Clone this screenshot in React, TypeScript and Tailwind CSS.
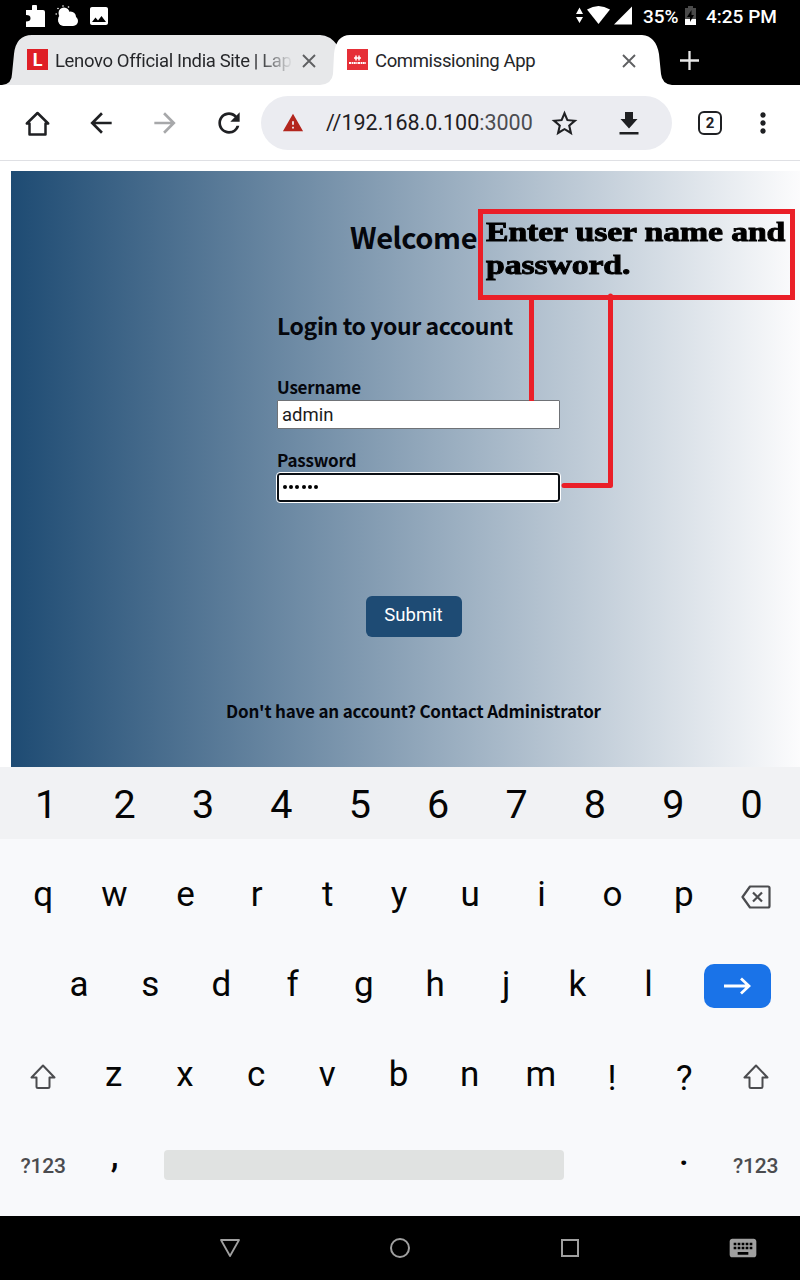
import type { ReactNode } from "react";
import {
  MdArrowBack,
  MdArrowForward,
  MdImage,
  MdKeyboard,
  MdMoreVert,
  MdRefresh,
  MdStarBorder,
  MdWarning,
} from "react-icons/md";

function StatusBar() {
  return (
    <div className="flex h-[34px] items-center bg-black pl-[24px] pr-[22px] text-white">
      <svg className="size-[24px]" viewBox="0 0 24 24" fill="currentColor">
        <path d="M2 5H8V2Q8 -1 10.500 -1T13 2V5H19Q21 5 21 7V22H2V16.500Q6.500 16.500 6.500 13.200T2 10Z" />
      </svg>
      <svg className="ml-[7px] size-[24px]" viewBox="0 0 24 24" fill="currentColor">
        <circle cx="9" cy="8" r="5.500" />
        <circle cx="9" cy="14.500" r="6" />
        <circle cx="15.500" cy="12" r="5.500" />
        <rect x="3.500" y="11" width="19.500" height="10" rx="5" />
        <circle cx="3" cy="3.500" r=".8" />
        <circle cx="8" cy="1" r=".8" />
        <circle cx="13.500" cy="2" r=".8" />
        <circle cx="1.2" cy="9" r=".8" />
      </svg>
      <MdImage className="ml-[8px] size-[24px] -translate-y-px" />
      <svg className="ml-auto h-[20px] w-[57px] -translate-y-px" viewBox="0 0 57 20" fill="currentColor">
        <path d="M0 8 3.500 1.500 7 8ZM0 11 3.500 17 7 11Z" />
        <path d="M11 3.500Q22.500-3.500 34 3.500L22.500 18Z" />
        <path d="M38 18.500 56 .5V18.500Z" />
      </svg>
      <span className="ml-[10px] w-[36px] text-[19px] font-medium tracking-[-0.1px]">35%</span>
      <svg className="ml-[6px] h-[19px] w-[11px] -translate-y-[2px]" viewBox="0 0 11 19">
        <path d="M3 0H8V2H11V19H0V2H3Z" fill="#4a4a4a" />
        <path d="M0 13H11V19H0Z" fill="#fff" />
        <path d="M6.500 4 2 11H5V16L9 9H6.500Z" fill="#000" />
      </svg>
      <span className="ml-[10px] w-[72px] whitespace-nowrap text-[19px] font-medium">4:25 PM</span>
    </div>
  );
}

function CloseIcon({ className }: { className: string }) {
  return (
    <svg className={className} viewBox="0 0 14 14" stroke="#5f6062" strokeWidth="1.9">
      <path d="M1 1 13 13M13 1 1 13" />
    </svg>
  );
}

function TabStrip() {
  return (
    <div className="relative h-[51px] bg-black">
      <svg className="absolute inset-0 h-[51px] w-[800px]" viewBox="0 0 800 51">
        <path d="M2 51Q12 50 12 40L14 20Q16 1 32 1H320Q330 1 338 12V51Z" fill="#e7e8ea" />
        <path d="M320 51Q332 50 333 40L334 20Q336 1 350 1H642Q656 2 659 20L661 40Q662 50 672 51Z" fill="#fff" />
      </svg>
      <div className="relative flex h-full items-center pt-[2px]">
        <div className="ml-[27px] flex size-[21px] -translate-y-px items-center justify-center bg-[#df1f26] text-[18px] font-bold leading-none text-white">
          L
        </div>
        <div className="ml-[7px] w-[238px] translate-y-px overflow-hidden whitespace-nowrap bg-linear-to-r from-[#252629] from-85% to-transparent bg-clip-text text-[18.5px] tracking-[-0.36px] text-transparent">
          Lenovo Official India Site | Lap
        </div>
        <CloseIcon className="ml-[9px] size-[14px]" />
        <svg className="ml-[31px] size-[21px] -translate-y-px" viewBox="0 0 21 21">
          <path d="M0 0H21V21H0Z" fill="#e62f37" />
          <path d="M7 9H14M9 6.500V11.500M12 6.500V11.500" stroke="#fff" strokeWidth="1.500" />
          <path d="M2 14H19" stroke="#fff" strokeWidth="1.800" strokeDasharray="2.200 .6 1.200 .5" />
        </svg>
        <div className="ml-[7px] w-[240px] translate-y-px whitespace-nowrap text-[18.5px] tracking-[-0.36px] text-[#252629]">
          Commissioning App
        </div>
        <CloseIcon className="ml-[7px] size-[14px]" />
        <svg className="ml-[44px] size-[19px]" viewBox="0 0 19 19" stroke="#e8e8e8" strokeWidth="2.300">
          <path d="M9.500 0V19M0 9.500H19" />
        </svg>
      </div>
    </div>
  );
}

function Toolbar() {
  return (
    <div className="flex h-[76px] items-center border-b border-[#dfe0e4] bg-white pt-px text-[#1f2023]">
      <svg className="ml-[25px] size-[25px]" viewBox="0 0 25 25" fill="none" stroke="currentColor" strokeWidth="2.500" strokeLinejoin="round">
        <path d="M12.500 2 1.800 12.500H4.500V23.500H20.500V12.500H23.200Z" />
      </svg>
      <MdArrowBack className="ml-[35px] size-[32px]" />
      <MdArrowForward className="ml-[32px] size-[32px] text-[#a7a8aa]" />
      <MdRefresh className="ml-[32px] size-[32px]" />
      <div className="ml-[16px] flex h-[54px] w-[411px] items-center rounded-full bg-[#ebecf1]">
        <MdWarning className="ml-[21px] size-[22px] text-[#b3261e]" />
        <span className="ml-[22px] w-[220px] whitespace-nowrap text-[21.5px]">
          //192.168.0.100<span className="text-[#4c4d51]">:3000</span>
        </span>
        <MdStarBorder className="ml-[3px] size-[31px]" />
        <svg className="ml-[39px] h-[24px] w-[20px]" viewBox="0 0 20 24" fill="currentColor">
          <path d="M6 1H14V8H18.500L10 17.500 1.500 8H6ZM.5 21H19.500V23.500H.5Z" />
        </svg>
      </div>
      <div className="ml-[26px] flex size-[24px] items-center justify-center rounded-[6px] border-[2.5px] border-[#1f2023] text-[15px] font-bold">
        2
      </div>
      <MdMoreVert className="ml-[25px] size-[32px]" />
    </div>
  );
}

function LoginPage() {
  return (
    <main className="relative h-[606px] bg-white pl-[11px] pt-[10px] font-['Noto_Sans_CJK_SC','Noto_Sans',sans-serif] font-bold text-[#05070d]">
      <div className="h-[596px] bg-linear-to-r/srgb from-[#1e4b73] to-[#fcfcfd] pt-[44px]">
        <h1 className="ml-[339px] text-[29px] leading-[42px] tracking-[-0.4px]">Welcome</h1>
        <form className="ml-[266px] mt-[50px] w-[283px]">
          <h2 className="whitespace-nowrap text-[23px] leading-[36px] tracking-[-0.4px]">Login to your account</h2>
          <label className="mt-[31px] block text-[17px] leading-[25px] tracking-[-0.2px]">Username</label>
          <div className="mt-px h-[29px] rounded-[1px] border border-[#6f7276] bg-white pl-[4px] font-[Roboto,sans-serif] text-[18.5px] font-normal leading-[28px] text-[#1c1c1c]">
            admin
          </div>
          <label className="mt-[18px] block text-[17px] leading-[25px] tracking-[-0.2px]">Password</label>
          <div className="mt-px flex h-[29px] items-center gap-[2.2px] rounded-[3px] border-2 border-[#0b0f14] bg-white pb-px pl-[4px] outline outline-white">
            {[0, 1, 2, 3, 4, 5].map((dot) => (
              <span key={dot} className="size-[4px] rounded-full bg-black" />
            ))}
          </div>
        </form>
        <button className="ml-[355px] mt-[94px] block h-[41px] w-[96px] rounded-[6px] bg-[#1e4b74] pb-px pr-px font-[Roboto,sans-serif] text-[18.5px] font-normal text-white">
          Submit
        </button>
        <p className="ml-[215px] mt-[61px] text-[17px] leading-[26px] tracking-[-0.19px]">Don't have an account? Contact Administrator</p>
      </div>
      <svg className="absolute left-0 top-0 h-[606px] w-[800px]" viewBox="0 161 800 606" fill="none" stroke="#ea1f28" strokeWidth="5">
        <path d="M480.500 211.500H792.500V297.500H480.500Z" />
        <path d="M531.500 298V401M610.500 296V485.500H564" strokeLinejoin="round" />
        <path d="M610.500 296V298M564 485.500H566" strokeLinecap="round" />
      </svg>
      <div className="absolute left-[486px] top-[55px] origin-left scale-x-[1.25] whitespace-nowrap font-['Liberation_Serif',serif] text-[27px] leading-[33px] tracking-[-0.1px] text-black [-webkit-text-stroke:0.9px_black]">
        Enter user name and
        <br />
        password.
      </div>
    </main>
  );
}

function Key({ children }: { children: ReactNode }) {
  return <div className="flex h-full w-[71.2px] shrink-0 items-center justify-center">{children}</div>;
}

function Shift() {
  return (
    <svg className="mt-[5px] size-[26px]" viewBox="0 0 26 26" fill="none" stroke="#4b4c4f" strokeWidth="2" strokeLinejoin="round">
      <path d="M13 1.500 1.500 13.500H6.500V22.500Q6.500 24 8 24H18Q19.500 24 19.500 22.500V13.500H24.500Z" />
    </svg>
  );
}

function Keyboard() {
  return (
    <div className="h-[449px] bg-[#f8f9fb] text-[35px] leading-none text-[#050505]">
      <div className="flex h-[72px] items-center bg-[#f1f2f4] pl-[7px] pt-[3px] text-[39.500px]">
        {[..."1234567890"].map((k) => (
          <div key={k} className="w-[78.4px] text-center">{k}</div>
        ))}
      </div>
      <div className="mt-[10px] flex h-[90px] pl-[8px]">
        {[..."qwertyuiop"].map((k) => <Key key={k}><span className="-ml-px pt-px">{k}</span></Key>)}
        <Key>
          <svg className="ml-[2px] mt-[6px] h-[24px] w-[30px]" viewBox="0 0 30 24" fill="none" stroke="#4b4c4f" strokeWidth="2.200" strokeLinejoin="round">
            <path d="M9 1.500H27Q28.500 1.500 28.500 3V21Q28.500 22.500 27 22.500H9L1.500 12ZM12 7.500 21 16.500M21 7.500 12 16.500" />
          </svg>
        </Key>
      </div>
      <div className="flex h-[90px] items-center pl-[44px]">
        {[..."asdfghjkl"].map((k) => <Key key={k}><span className="-ml-px">{k}</span></Key>)}
        <div className="ml-[19px] mt-[4px] flex h-[44px] w-[67px] items-center justify-center rounded-[10px] bg-[#1a73e8]">
          <svg className="h-[18px] w-[27px]" viewBox="0 0 27 18" fill="none" stroke="#fff" strokeWidth="2.800">
            <path d="M0 9H25M17 1.500 25 9 17 16.500" />
          </svg>
        </div>
      </div>
      <div className="flex h-[90px] pl-[7px]">
        <Key><Shift /></Key>
        {[..."zxcvbnm"].map((k) => <Key key={k}><span className="pt-px">{k}</span></Key>)}
        <Key><span className="pt-[9px]">!</span></Key>
        <Key><span className="ml-[2px] pt-[9px]">?</span></Key>
        <Key><span className="ml-[3px]"><Shift /></span></Key>
      </div>
      <div className="flex h-[92px] items-center pl-[8px]">
        <Key><span className="-ml-px pt-[2px] text-[21px] font-medium tracking-[-0.2px] text-[#4b4c4f]">?123</span></Key>
        <Key><span className="-mt-[20px] font-medium">,</span></Key>
        <div className="ml-[14px] h-[30px] w-[400px] rounded-[4px] bg-[#e0e2e1]" />
        <div className="ml-[84px] flex">
          <Key><span className="-mt-[18px] font-medium">.</span></Key>
          <Key><span className="ml-px pt-[2px] text-[21px] font-medium tracking-[-0.2px] text-[#4b4c4f]">?123</span></Key>
        </div>
      </div>
    </div>
  );
}

function NavigationBar() {
  return (
    <div className="flex h-[64px] items-center bg-black text-[#a0a0a0]">
      <svg className="ml-[220px] size-[20px]" viewBox="0 0 20 20" fill="none" stroke="currentColor" strokeWidth="1.800" strokeLinejoin="round">
        <path d="M1 2H19L10 18Z" />
      </svg>
      <div className="ml-[150px] size-[20px] rounded-full border-2 border-current" />
      <div className="ml-[151px] size-[18px] border-2 border-current" />
      <MdKeyboard className="ml-[148px] size-[32px]" />
    </div>
  );
}

export default function App() {
  return (
    <div className="h-[1280px] w-[800px] overflow-hidden font-[Roboto,sans-serif]">
      <StatusBar />
      <TabStrip />
      <Toolbar />
      <LoginPage />
      <Keyboard />
      <NavigationBar />
    </div>
  );
}
